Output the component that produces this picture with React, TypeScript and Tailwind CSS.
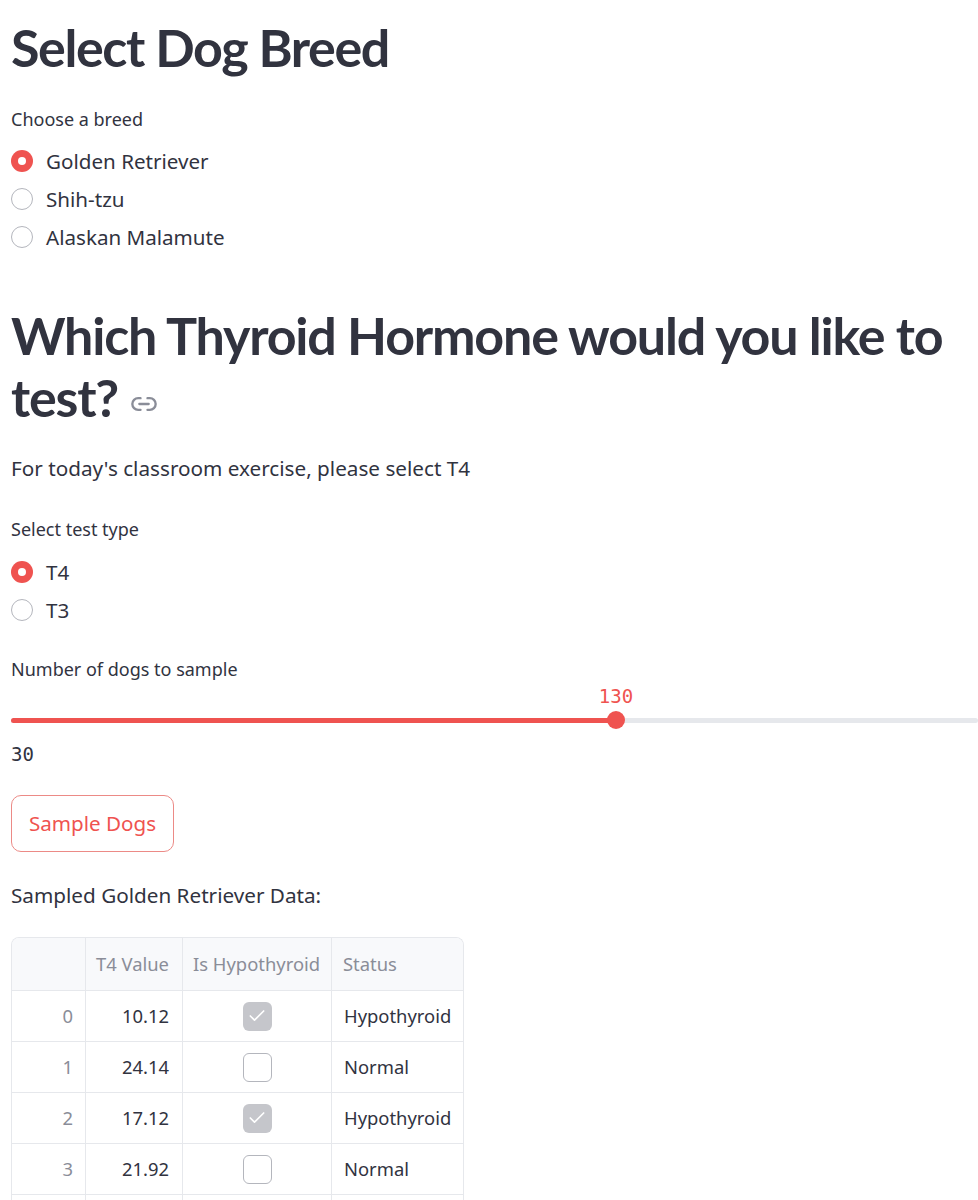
import React from 'react';
import { Link2, Check } from 'lucide-react';

const RED = '#ef5350';
const MONO = { fontFamily: '"DejaVu Sans Mono", monospace' };
const HEAD = { fontFamily: 'Lato, "Noto Sans", sans-serif' };

const Radio = ({ label, checked }: { label: string; checked?: boolean }) => (
  <div className="flex h-[38px] items-center gap-[13px]">
    {checked ? (
      <span className="flex h-[22px] w-[22px] items-center justify-center rounded-full bg-[#ef5350]">
        <span className="h-[8px] w-[8px] rounded-full bg-white" />
      </span>
    ) : (
      <span className="h-[22px] w-[22px] rounded-full border border-[#b4b6bd] bg-white" />
    )}
    <span className="text-[20.6px] leading-[28px] text-[#31333f]">{label}</span>
  </div>
);

const rows = [
  { i: 0, v: '10.12', h: true },
  { i: 1, v: '24.14', h: false },
  { i: 2, v: '17.12', h: true },
  { i: 3, v: '21.92', h: false },
];

export default function App() {
  return (
    <div
      className="h-[1200px] overflow-hidden bg-white pl-[11px] pt-[13px] text-[#31333f]"
      style={{ fontFamily: '"Noto Sans", "Open Sans", sans-serif' }}
    >
      <h1 className="text-[52px] font-bold leading-[68px] tracking-[-1.4px]" style={HEAD}>
        Select Dog Breed
      </h1>

      <div className="mt-[26px] text-[18px] leading-[24px]">Choose a breed</div>
      <div className="mt-[11px]">
        <Radio label="Golden Retriever" checked />
        <Radio label="Shih-tzu" />
        <Radio label="Alaskan Malamute" />
      </div>

      <h2 className="mt-[48px] text-[52px] font-bold leading-[62px] tracking-[-1.2px]" style={HEAD}>
        <span className="whitespace-nowrap">Which Thyroid Hormone would you like to</span>
        <br />
        test?
        <span className="ml-[12px] inline-flex align-middle">
          <Link2 size={28} strokeWidth={2} color="#8a8d98" />
        </span>
      </h2>

      <p className="mt-[26px] text-[20.7px] leading-[28px]">For today's classroom exercise, please select T4</p>

      <div className="mt-[35px] text-[18px] leading-[24px]">Select test type</div>
      <div className="mt-[12px]">
        <Radio label="T4" checked />
        <Radio label="T3" />
      </div>

      <div className="mt-[28px] text-[18px] leading-[24px]">Number of dogs to sample</div>
      <div className="mt-[2px]">
        <div className="relative h-[26px]">
          <span
            className="absolute left-[605px] -translate-x-1/2 text-[19px] leading-[26px] text-[#ef5350]"
            style={MONO}
          >
            130
          </span>
        </div>
        <div className="relative flex h-[22px] items-center">
          <div className="flex h-[5px] w-full overflow-hidden rounded-full bg-[#e6e8ec]">
            <div className="h-full w-[605px] bg-[#ef5350]" />
          </div>
          <span className="absolute left-[596px] top-[2px] h-[18px] w-[18px] rounded-full" style={{ background: RED }} />
        </div>
        <div className="mt-[11px] text-[19px] leading-[24px]" style={MONO}>
          30
        </div>
      </div>

      <button className="mt-[29px] h-[57px] rounded-[10px] border border-[#ec8a86] px-[17px] text-[20.6px] text-[#ef5350]">
        Sample Dogs
      </button>

      <p className="mt-[29px] text-[20.7px] leading-[28px]">Sampled Golden Retriever Data:</p>

      <div className="mt-[28px] w-[453px] overflow-hidden rounded-t-[8px] border-l border-r border-t border-[#e6e8ec] text-[18.4px]">
        <div className="grid grid-cols-[74px_97px_149px_132px] bg-[#f8f9fb] text-[#8a8d98]">
          <div className="h-[53px] border-b border-r border-[#e6e8ec]" />
          <div className="flex h-[53px] items-center justify-end border-b border-r border-[#e6e8ec] pr-[13px]">T4 Value</div>
          <div className="flex h-[53px] items-center border-b border-r border-[#e6e8ec] pl-[10px]">Is Hypothyroid</div>
          <div className="flex h-[53px] items-center border-b border-[#e6e8ec] pl-[11px]">Status</div>
        </div>
        {rows.map((r) => (
          <div key={r.i} className="grid grid-cols-[74px_97px_149px_132px]">
            <div className="flex h-[51px] items-center justify-end border-b border-r border-[#e6e8ec] pr-[12px] text-[#8a8d98]">
              {r.i}
            </div>
            <div className="flex h-[51px] items-center justify-end border-b border-r border-[#e6e8ec] pr-[13px]">
              {r.v}
            </div>
            <div className="flex h-[51px] items-center justify-center border-b border-r border-[#e6e8ec]">
              {r.h ? (
                <span className="flex h-[29px] w-[29px] items-center justify-center rounded-[6px] bg-[#c5c6cb]">
                  <Check size={20} strokeWidth={2} color="#ffffff" />
                </span>
              ) : (
                <span className="h-[29px] w-[29px] rounded-[6px] border border-[#b4b6bd] bg-white" />
              )}
            </div>
            <div className="flex h-[51px] items-center border-b border-[#e6e8ec] pl-[12px]">
              {r.h ? 'Hypothyroid' : 'Normal'}
            </div>
          </div>
        ))}
        <div className="grid grid-cols-[74px_97px_149px_132px]">
          <div className="h-[51px] border-r border-[#e6e8ec]" />
          <div className="h-[51px] border-r border-[#e6e8ec]" />
          <div className="h-[51px] border-r border-[#e6e8ec]" />
          <div className="h-[51px]" />
        </div>
      </div>
    </div>
  );
}
